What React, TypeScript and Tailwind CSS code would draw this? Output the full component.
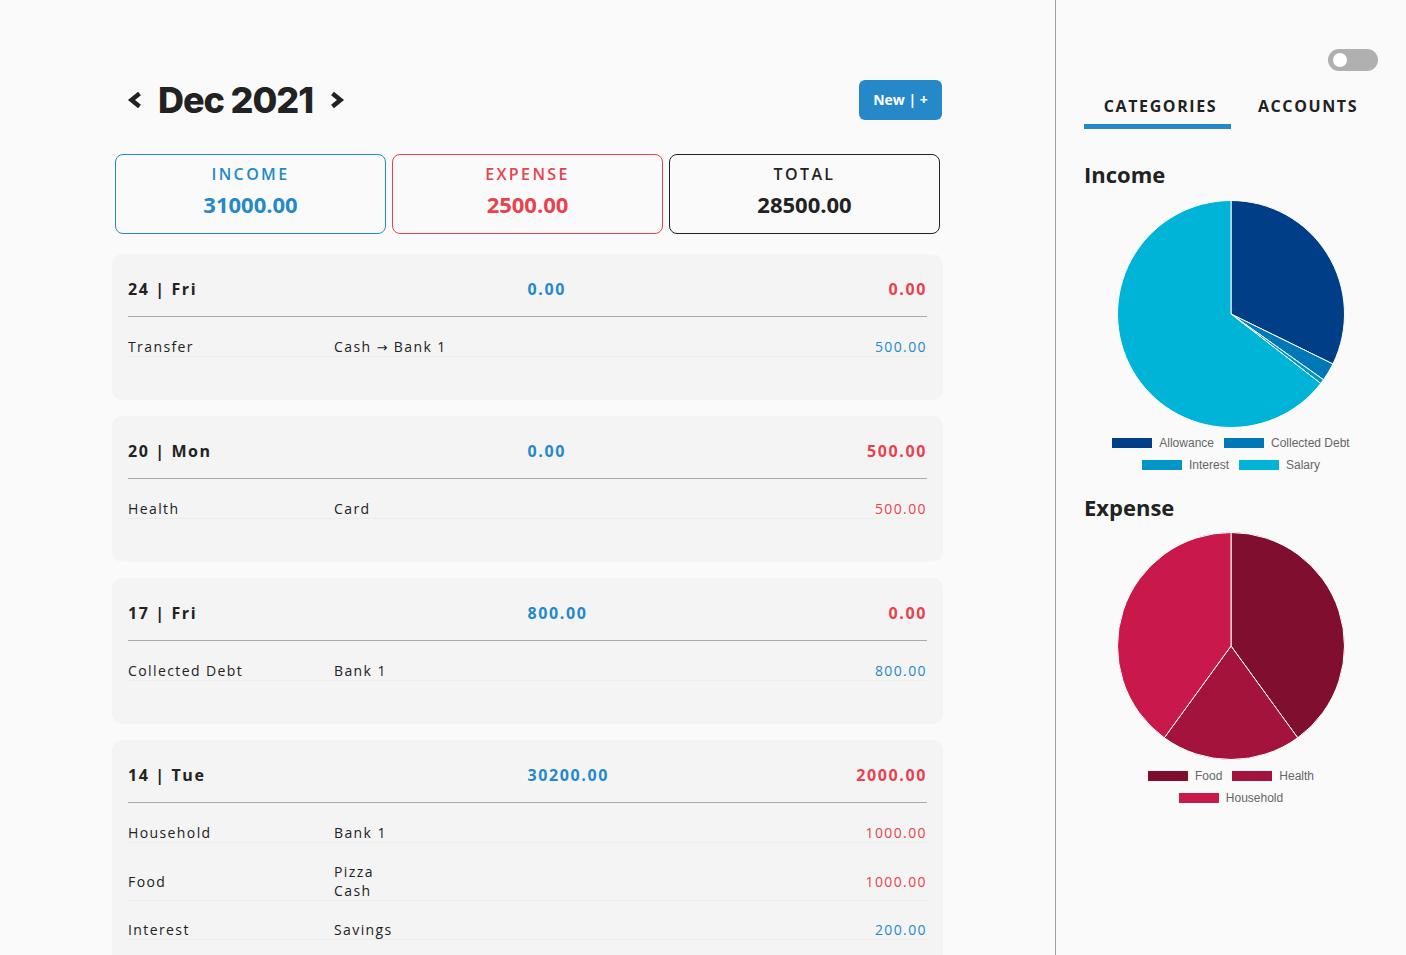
import React from "react";

type Slice = { label: string; value: number; color: string };

const incomeData: Slice[] = [
  { label: "Allowance", value: 10000, color: "#003f88" },
  { label: "Collected Debt", value: 800, color: "#0077b6" },
  { label: "Interest", value: 200, color: "#0096c7" },
  { label: "Salary", value: 20000, color: "#00b4d8" },
];

const expenseData: Slice[] = [
  { label: "Food", value: 1000, color: "#800f2f" },
  { label: "Health", value: 500, color: "#a4133c" },
  { label: "Household", value: 1000, color: "#c9184a" },
];

function Pie({ data }: { data: Slice[] }) {
  const total = data.reduce((s, d) => s + d.value, 0);
  const cx = 115;
  const cy = 115;
  const r = 113.5;
  let acc = 0;
  const paths = data.map((d) => {
    const a0 = (acc / total) * Math.PI * 2;
    acc += d.value;
    const a1 = (acc / total) * Math.PI * 2;
    const x0 = cx + r * Math.sin(a0);
    const y0 = cy - r * Math.cos(a0);
    const x1 = cx + r * Math.sin(a1);
    const y1 = cy - r * Math.cos(a1);
    const large = a1 - a0 > Math.PI ? 1 : 0;
    const dStr = `M ${cx} ${cy} L ${x0} ${y0} A ${r} ${r} 0 ${large} 1 ${x1} ${y1} Z`;
    return <path key={d.label} d={dStr} fill={d.color} stroke="#ffffff" strokeWidth={1} />;
  });
  return (
    <svg width="230" height="230" viewBox="0 0 230 230">
      {paths}
    </svg>
  );
}

function Legend({ rows }: { rows: Slice[][] }) {
  return (
    <div className="flex flex-col items-center gap-[10px] font-['Liberation_Sans',Arial,sans-serif] text-[12px] leading-[12px] text-[#666]">
      {rows.map((row, i) => (
        <div key={i} className="flex items-center gap-[10px]">
          {row.map((s) => (
            <div key={s.label} className="flex items-center gap-[7px]">
              <span className="inline-block h-[10px] w-[40px]" style={{ backgroundColor: s.color }} />
              <span>{s.label}</span>
            </div>
          ))}
        </div>
      ))}
    </div>
  );
}

type Tx = { cat: string; acct: React.ReactNode[]; amt: string; income: boolean };
type Day = { date: string; inc: string; exp: string; txs: Tx[] };

const arrow = <span className="font-['DejaVu_Sans',sans-serif] text-[13px] leading-[0]">→</span>;

const days: Day[] = [
  {
    date: "24 | Fri",
    inc: "0.00",
    exp: "0.00",
    txs: [{ cat: "Transfer", acct: [<span key="a">Cash {arrow} Bank 1</span>], amt: "500.00", income: true }],
  },
  { date: "20 | Mon", inc: "0.00", exp: "500.00", txs: [{ cat: "Health", acct: ["Card"], amt: "500.00", income: false }] },
  { date: "17 | Fri", inc: "800.00", exp: "0.00", txs: [{ cat: "Collected Debt", acct: ["Bank 1"], amt: "800.00", income: true }] },
  {
    date: "14 | Tue",
    inc: "30200.00",
    exp: "2000.00",
    txs: [
      { cat: "Household", acct: ["Bank 1"], amt: "1000.00", income: false },
      { cat: "Food", acct: ["Pizza", "Cash"], amt: "1000.00", income: false },
      { cat: "Interest", acct: ["Savings"], amt: "200.00", income: true },
    ],
  },
];

function DayCard({ d }: { d: Day }) {
  return (
    <div className="rounded-[10px] bg-[#f4f4f4] px-[16px] pt-[16px] pb-[44px]">
      <div className="grid grid-cols-2 border-b border-[#aaaaaa] pt-[9px] pb-[17px] text-[16px] font-bold leading-[20px] tracking-[0.1em]">
        <div className="text-[#222]">{d.date}</div>
        <div className="flex justify-between">
          <span className="text-[#2589c9]">{d.inc}</span>
          <span className="text-[#e8414f]">{d.exp}</span>
        </div>
      </div>
      {d.txs.map((t, i) => (
        <div key={i} className="mb-[-1px] flex items-center border-b border-[#ededed] pt-[20px] text-[14px] leading-[19px] tracking-[0.1em] text-[#222]">
          <div className="w-[206px]">{t.cat}</div>
          <div className="flex flex-1 flex-col">
            {t.acct.map((a, j) => (
              <span key={j} className="h-[19px]">{a}</span>
            ))}
          </div>
          <div className={t.income ? "text-[#2589c9]" : "text-[#e8414f]"}>{t.amt}</div>
        </div>
      ))}
    </div>
  );
}

function Chevron({ dir }: { dir: "l" | "r" }) {
  return (
    <svg width="15" height="18" viewBox="0 0 15 18">
      {dir === "l" ? (
        <polyline points="12.5,2.5 4.5,9 12.5,15.5" fill="none" stroke="#222" strokeWidth="4.5" strokeLinejoin="miter" />
      ) : (
        <polyline points="2.5,2.5 10.5,9 2.5,15.5" fill="none" stroke="#222" strokeWidth="4.5" strokeLinejoin="miter" />
      )}
    </svg>
  );
}

export default function App() {
  return (
    <div className="flex h-[955px] w-full overflow-hidden bg-[#fafafa] font-['Open_Sans',sans-serif] text-[#222]">
      <main className="flex-1 overflow-hidden">
        <div className="mx-auto w-[831px] pt-[80px]">
          <div className="flex items-center justify-between pl-[15px] pr-[1px]">
            <div className="flex items-center">
              <Chevron dir="l" />
              <span className="ml-[16px] mr-[17px] font-['Inter',sans-serif] text-[36px] font-extrabold leading-[40px] tracking-[-0.03em] text-[#222]">Dec 2021</span>
              <Chevron dir="r" />
            </div>
            <button className="h-[40px] w-[83px] rounded-[6px] bg-[#2589c9] text-[14px] font-bold leading-[38px] text-white">New | +</button>
          </div>
          <div className="mt-[34px] flex gap-[6px] px-[3px]">
            <div className="flex h-[80px] flex-1 flex-col items-center rounded-[8px] border border-[#2589c9] pt-[8px]">
              <div className="text-[16px] font-semibold leading-[22px] tracking-[0.15em] text-[#2589c9]">INCOME</div>
              <div className="mt-[5px] text-[22px] font-bold leading-[28px] text-[#2589c9]">31000.00</div>
            </div>
            <div className="flex h-[80px] flex-1 flex-col items-center rounded-[8px] border border-[#e8414f] pt-[8px]">
              <div className="text-[16px] font-semibold leading-[22px] tracking-[0.15em] text-[#e8414f]">EXPENSE</div>
              <div className="mt-[5px] text-[22px] font-bold leading-[28px] text-[#e8414f]">2500.00</div>
            </div>
            <div className="flex h-[80px] flex-1 flex-col items-center rounded-[8px] border border-[#222] pt-[8px]">
              <div className="text-[16px] font-semibold leading-[22px] tracking-[0.15em] text-[#222]">TOTAL</div>
              <div className="mt-[5px] text-[22px] font-bold leading-[28px] text-[#222]">28500.00</div>
            </div>
          </div>
          <div className="mt-[20px] flex flex-col gap-[16px]">
            {days.map((d) => (
              <DayCard key={d.date} d={d} />
            ))}
          </div>
        </div>
      </main>
      <aside className="w-[351px] shrink-0 border-l border-[#a0a0a0] px-[28px] pt-[49px]">
        <div className="flex justify-end">
          <div className="flex h-[22px] w-[50px] items-center rounded-full bg-[#b0b0b0] px-[5px]">
            <div className="h-[14px] w-[14px] rounded-full bg-white" />
          </div>
        </div>
        <div className="mt-[23px] flex">
          <div className="w-[147px] border-b-[5px] border-[#2589c9] pb-[6px] pl-[6px] text-center text-[16px] font-bold leading-[24px] tracking-[0.1em] text-[#222]">CATEGORIES</div>
          <div className="w-[147px] pb-[11px] pl-[7px] text-center text-[16px] font-bold leading-[24px] tracking-[0.1em] text-[#222]">ACCOUNTS</div>
        </div>
        <div className="mt-[30px] text-[22px] font-bold leading-[30px] text-[#222]">Income</div>
        <div className="mt-[10px] flex justify-center">
          <Pie data={incomeData} />
        </div>
        <div className="mt-[8px]">
          <Legend rows={[[incomeData[0], incomeData[1]], [incomeData[2], incomeData[3]]]} />
        </div>
        <div className="mt-[21px] text-[22px] font-bold leading-[30px] text-[#222]">Expense</div>
        <div className="mt-[9px] flex justify-center">
          <Pie data={expenseData} />
        </div>
        <div className="mt-[9px]">
          <Legend rows={[[expenseData[0], expenseData[1]], [expenseData[2]]]} />
        </div>
      </aside>
    </div>
  );
}
